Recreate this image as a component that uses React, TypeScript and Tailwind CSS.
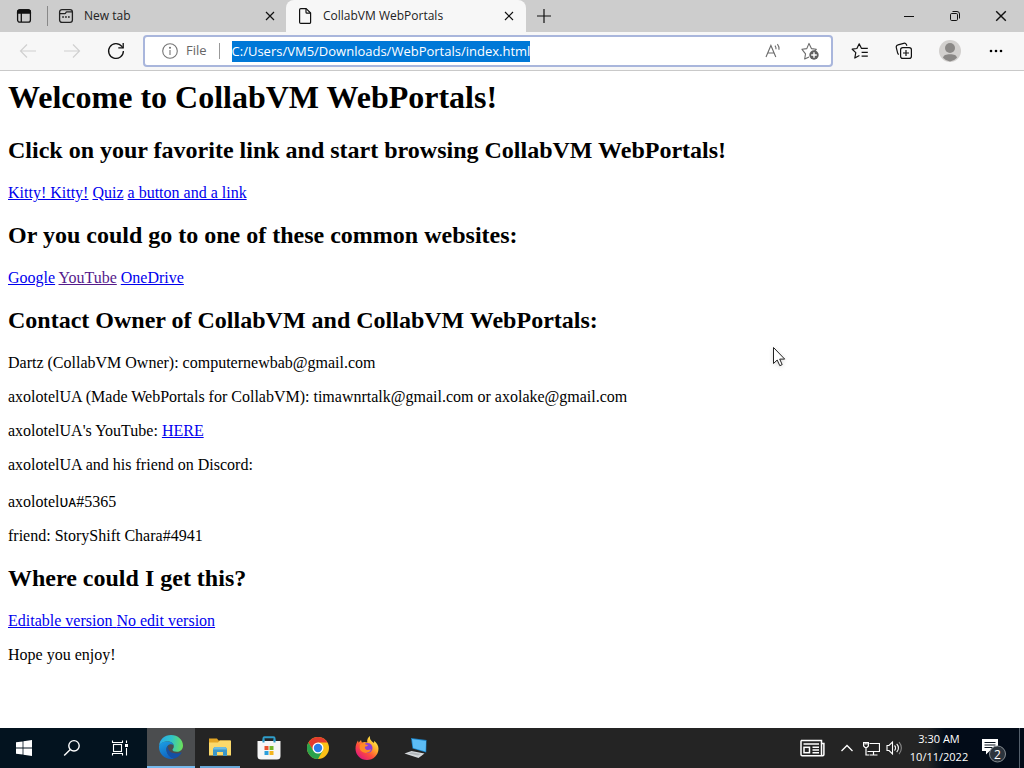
import React, { useEffect, useRef } from 'react';

const link = 'text-[#0000ee] underline';
const h2 = 'text-2xl leading-[27px] font-bold';

function TabActionsIcon() {
  return (
    <svg width="16" height="16" viewBox="0 0 16 16" fill="none" stroke="#111" strokeWidth="1.3">
      <rect x="1.6" y="1.8" width="12.8" height="12.4" rx="2.2" />
      <path d="M1.6 5V4a2.2 2.2 0 0 1 2.2-2.2h8.4A2.2 2.2 0 0 1 14.4 4v1z" fill="#111" />
      <path d="M5.3 5v9" />
    </svg>
  );
}

function NewTabIcon() {
  return (
    <svg width="16" height="16" viewBox="0 0 16 16" fill="none" stroke="#222" strokeWidth="1.3">
      <rect x="1.6" y="1.6" width="12.8" height="12.8" rx="2.4" />
      <path d="M1.6 5.6h5.2c1.2 0 .8-1.8 2-1.8h5.2" />
      <path d="M4.2 9h1.7M7.1 9h1.7M10 9h1.7" strokeWidth="1.7" />
    </svg>
  );
}

function PageIcon() {
  return (
    <svg width="16" height="18" viewBox="0 0 16 18" fill="none" stroke="#111" strokeWidth="1.2" strokeLinejoin="round">
      <path d="M2.6 2.8a1.2 1.2 0 0 1 1.2-1.2h5.4L13.6 6v9.2a1.2 1.2 0 0 1-1.2 1.2H3.8a1.2 1.2 0 0 1-1.2-1.2z" />
      <path d="M9 1.8v3.4a1 1 0 0 0 1 1h3.4" />
    </svg>
  );
}

function Cross({ size }: { size: number }) {
  return (
    <svg width={size} height={size} viewBox="0 0 10 10" fill="none" stroke="#111" strokeWidth="1.2">
      <path d="M1 1l8 8M9 1L1 9" />
    </svg>
  );
}

function Arrow({ flip }: { flip?: boolean }) {
  return (
    <svg width="18" height="16" viewBox="0 0 18 16" fill="none" stroke="#d0d0d0" strokeWidth="1.2" className={flip ? 'rotate-180' : ''}>
      <path d="M17 8H1.5M8 1.5L1.5 8 8 14.5" />
    </svg>
  );
}

function ReloadIcon() {
  return (
    <svg width="18" height="18" viewBox="0 0 18 18" fill="none" stroke="#111" strokeWidth="1.3">
      <path d="M16.4 9A7.4 7.4 0 1 1 14.8 4.4l1.2 1.4" />
      <path d="M16.2 1v4.9h-4.9" />
    </svg>
  );
}

function InfoIcon() {
  return (
    <svg width="16" height="16" viewBox="0 0 16 16" fill="none" stroke="#767676" strokeWidth="1.1">
      <circle cx="8" cy="8" r="7.3" />
      <path d="M8 7v5" />
      <circle cx="8" cy="4.8" r=".5" fill="#767676" />
    </svg>
  );
}

function ReadAloudIcon() {
  return (
    <svg width="16" height="16" viewBox="0 0 16 16" fill="none" stroke="#6b6b6b" strokeWidth="1.1">
      <path d="M1 14L5.9 2.5 10.8 14M2.8 10h6.3" />
      <path d="M10 2.6a5 5 0 0 1 1 3.6M12.4 1.2a7.6 7.6 0 0 1 1.6 5.6" />
    </svg>
  );
}

function AddFavoriteIcon() {
  return (
    <svg width="18" height="18" viewBox="0 0 18 18" fill="none" stroke="#6b6b6b" strokeWidth="1.1" strokeLinejoin="round">
      <path d="M8 15.1L3.7 17l.8-5.2L1 7.3l4.8-.7L8 1.4l2.4 5.2 4.9.7-2 2" />
      <circle cx="13" cy="13" r="4.7" fill="#5f5f5f" stroke="none" />
      <path d="M13 10.2v5.6M10.2 13h5.6" stroke="#fff" strokeWidth="1.4" />
    </svg>
  );
}

function FavoritesIcon() {
  return (
    <svg width="18" height="18" viewBox="0 0 18 18" fill="none" stroke="#111" strokeWidth="1.2" strokeLinejoin="round">
      <path d="M8.4 13.4L3.8 16l1-5.4L1.2 7.2l4.7-.7L8.2 1.8l2.2 4.5h6.4M10.6 10.4h6.2M10.6 14.2h6.2" />
    </svg>
  );
}

function CollectionsIcon() {
  return (
    <svg width="18" height="18" viewBox="0 0 18 18" fill="none" stroke="#111" strokeWidth="1.2">
      <path d="M3.8 12.4A2.5 2.5 0 0 1 2.6 10.8L1.3 5.6A2.3 2.3 0 0 1 3 2.8l5.7-1.5a2.3 2.3 0 0 1 2.7 1.2l.5 1.3" />
      <rect x="5.6" y="5.6" width="10.8" height="10.8" rx="2.2" />
      <path d="M11 8v6M8 11h6" />
    </svg>
  );
}

function ProfileIcon() {
  return (
    <svg width="22" height="22" viewBox="0 0 22 22">
      <circle cx="11" cy="11" r="11" fill="#d2d0ce" />
      <circle cx="11" cy="8" r="5" fill="#8a8886" />
      <path d="M4 17.8C4.4 15.2 7 14.2 11 14.2s6.6 1 7 3.6A11 11 0 0 1 11 21.5 11 11 0 0 1 4 17.8z" fill="#8a8886" />
    </svg>
  );
}

function WindowsIcon() {
  return (
    <svg width="16" height="16" viewBox="0 0 16 16" fill="#fff">
      <path d="M0 2.3L6.6 1.4V7.6H0zM7.4 1.3L16 0v7.6H7.4zM0 8.4h6.6v6.2L0 13.7zM7.4 8.4H16V16l-8.6-1.2z" />
    </svg>
  );
}

function SearchIcon() {
  return (
    <svg width="18" height="18" viewBox="0 0 18 18" fill="none" stroke="#fff" strokeWidth="1.4">
      <circle cx="11" cy="6.8" r="5.2" />
      <path d="M7.3 10.5L1.2 16.6" />
    </svg>
  );
}

function TaskViewIcon() {
  return (
    <svg width="18" height="16" viewBox="0 0 18 16" fill="none" stroke="#fff" strokeWidth="1.1">
      <rect x="2.5" y="4.500" width="8" height="7" />
      <path d="M1.5 .5v2h10v-2M1.5 15.5v-2h10v2M15.5 .5v2.500M15.500 8v7.500" />
      <rect x="14" y="4" width="3" height="3" fill="#fff" stroke="none" />
    </svg>
  );
}

function EdgeIcon() {
  return (
    <svg width="26" height="26" viewBox="0 0 26 26">
      <defs>
        <linearGradient id="edgeTop" x1="0" y1=".4" x2="1" y2=".5">
          <stop offset="0" stopColor="#2aa9e8" />
          <stop offset=".5" stopColor="#2fc3c8" />
          <stop offset="1" stopColor="#6be05a" />
        </linearGradient>
        <linearGradient id="edgeLeft" x1=".2" y1="0" x2=".6" y2="1">
          <stop offset="0" stopColor="#1b9de2" />
          <stop offset="1" stopColor="#0f62c0" />
        </linearGradient>
      </defs>
      <path d="M1 12C1.5 5.5 6.5 1 13 1c7 0 12 5 12 10.5 0 4-2.8 6.3-6.2 6.3-2.8 0-4.3-1-4.3-2 0-.8 1.3-1.3 1.3-3.6C15.800 9.400 13 7.500 9.700 7.500 5.500 7.500 2 9.500 1 12z" fill="url(#edgeTop)" />
      <path d="M1 13c0-3.300 3.600-5.500 8.500-5.500 3.500 0 5.700 1.700 6.200 3.800-1-.9-2.200-1.200-3.300-1C9.400 10.800 8 13.500 8.500 16.500c.6 4 3.500 7 7.500 8-1 .4-2 .5-3 .5C6.400 25 1 19.600 1 13z" fill="url(#edgeLeft)" />
      <path d="M10.700 11.200C8.500 12.800 8 15.500 8.900 18.200c1.200 3.800 4.600 6.300 7.800 6.200 3-1 5.300-3 6.800-5.400.3-.5-.1-.8-.6-.6-5.400 2.400-11.500.2-12.700-3.700-.4-1.300-.2-2.500.5-3.500z" fill="#1550a5" />
    </svg>
  );
}

function FolderIcon() {
  return (
    <svg width="24" height="20" viewBox="0 0 24 20">
      <path d="M1 1.500h8l1.500 2H22v4H1z" fill="#e3a524" />
      <path d="M1 5.500h9l2-2h11V18.500H1z" fill="#fbd96b" />
      <path d="M5 19v-7.500l2-1.500h10l2 1.500V19h-4v-4H9v4z" fill="#3b97c8" />
      <path d="M5 11.500l2-1.500h10l2 1.500v1H5z" fill="#6bbce2" />
    </svg>
  );
}

function StoreIcon() {
  return (
    <svg width="24" height="24" viewBox="0 0 24 24">
      <path d="M6.500 7V2.200a1 1 0 0 1 1-1h9a1 1 0 0 1 1 1V7" fill="none" stroke="#2f9dc9" strokeWidth="2" />
      <path d="M.5 5h23V20a3.500 3.500 0 0 1-3.500 3.500H4A3.500 3.500 0 0 1 .5 20z" fill="#f6f6f6" />
      <path d="M6.500 6.500V3.500M17.500 6.500V3.500" stroke="#2f9dc9" strokeWidth="2" />
      <path d="M7.500 10H11.500V14H7.500z" fill="#e8522c" />
      <path d="M12.500 10h4v4h-4z" fill="#76b82a" />
      <path d="M7.500 15h4v4h-4z" fill="#2b9fdc" />
      <path d="M12.500 15h4v4h-4z" fill="#f3b51d" />
    </svg>
  );
}

function ChromeIcon() {
  return (
    <svg width="22" height="22" viewBox="0 0 22 22">
      <circle cx="11" cy="11" r="11" fill="#fbc116" />
      <path d="M1.470 5.500A11 11 0 0 1 20.530 5.500H11L6.240 13.750z" fill="#e33b2e" />
      <path d="M1.470 5.500A11 11 0 0 0 11 22L15.760 13.750 11 16.500 6.240 13.750z" fill="#2ba24c" />
      <circle cx="11" cy="11" r="5.500" fill="#fff" />
      <circle cx="11" cy="11" r="4.200" fill="#2b7de9" />
    </svg>
  );
}

function FirefoxIcon() {
  return (
    <svg width="24" height="24" viewBox="0 0 24 24">
      <defs>
        <linearGradient id="fox" x1=".85" y1=".1" x2=".2" y2=".9">
          <stop offset="0" stopColor="#fff04a" />
          <stop offset=".35" stopColor="#ffab2c" />
          <stop offset=".65" stopColor="#ff5038" />
          <stop offset="1" stopColor="#e31d78" />
        </linearGradient>
      </defs>
      <path d="M15 0c-.5 2.500.5 4 2 5.500l2 1.500c.3-.8.2-1.500-.1-2.200C22 7 23.500 10 23.500 12.700 23.500 19 18.300 24 12 24S.5 19 .5 12.700C.5 9.500 1.500 6.500 3 4.500l.6 2.200L6 4l.8 2.500c2-.8 4-.6 5.500 0C11.700 4 13 1.200 15 0z" fill="url(#fox)" />
      <circle cx="12.500" cy="12" r="5" fill="#8b3fd6" />
      <path d="M5 8.500c2-1.200 4.500-.9 6.500.2l1.500.2c-.3 1.200-1.700 1.500-3 1.800-.5 1.500.5 2.900 2 3.200 1.800.3 2.800-.6 4.300-.3-1.300 2.600-4.500 4-7.300 3C5 15.300 4 12.500 5 8.500z" fill="#ff8a25" />
    </svg>
  );
}

function LaptopIcon() {
  return (
    <svg width="24" height="22" viewBox="0 0 24 22">
      <path d="M7 1l15.500 2-.3 12.500L8.500 11.500z" fill="#1c82c4" />
      <path d="M8 2l14 1.900-.4 10.600L9.200 11z" fill="#5cbcf5" />
      <path d="M.5 16.500L7.500 14 20.500 16.500 14.500 21z" fill="#d5d9dc" />
      <path d="M4 16.500l3.800-1.300 9 1.700-2.800 1.700z" fill="#b3b8bc" />
    </svg>
  );
}

function NewsIcon() {
  return (
    <svg width="25" height="18" viewBox="0 0 25 18" fill="none" stroke="#fff" strokeWidth="1.500">
      <path d="M1 1.500h20.500v14a1.200 1.200 0 0 0 2.400 0V4.500h-2.400M1 1.500v14a1.200 1.200 0 0 0 1.200 1.200h20.500M3.500 5h15.500M12.500 8.300H19M12.500 11H19M12.500 13.700H19" />
      <rect x="4" y="8.300" width="5.500" height="5.400" />
    </svg>
  );
}

function NetworkIcon() {
  return (
    <svg width="17" height="15" viewBox="0 0 17 15" fill="none" stroke="#fff" strokeWidth="1.200">
      <path d="M6.500 2.500h10v8h-12M10.500 10.500v3.500M6.500 14h8" />
      <path d="M.6 1.500h4.800v3.500l-1.400 1.500H2L.6 5zM3 6.500v7.500h3M2.200 1.500v2M3.900 1.500v2" />
    </svg>
  );
}

function VolumeIcon() {
  return (
    <svg width="17" height="16" viewBox="0 0 17 16" fill="none" stroke="#fff" strokeWidth="1.100">
      <path d="M1 5.500h2L6.500 2v12L3 10.500H1z" />
      <path d="M8.500 5.500a3.500 3.500 0 0 1 0 5M10.700 3.800a6 6 0 0 1 0 8.400" />
      <path d="M13 2a8.800 8.800 0 0 1 0 12" stroke="#888" />
    </svg>
  );
}

function NotificationsIcon() {
  return (
    <svg width="26" height="26" viewBox="0 0 26 26">
      <path d="M1 2h16v12H8.500L5 17.500V14H1z" fill="#fff" />
      <path d="M3.500 5.500h11M3.500 8h11M3.500 10.500h8" stroke="#0a1420" />
      <circle cx="16.500" cy="17" r="8" fill="#2b333c" stroke="#858b91" />
    </svg>
  );
}

function BrowserTabs() {
  return (
    <div className="flex h-8 bg-[#cdcdcd] text-xs text-[#222]">
      <button aria-label="Tab actions" className="flex w-[47px] items-center justify-center"><TabActionsIcon /></button>
      <div className="my-[6px] w-px bg-[#888]" />
      <div className="flex w-[238px] min-w-0 items-center pr-[11px] pl-[10px]">
        <NewTabIcon />
        <span className="ml-[10px] flex-1 truncate">New tab</span>
        <button aria-label="Close New tab"><Cross size={10} /></button>
      </div>
      <div className="flex w-60 min-w-0 items-center rounded-t-lg bg-[#f7f7f7] pr-3 pl-[11px]">
        <PageIcon />
        <span className="ml-[10px] flex-1 truncate">CollabVM WebPortals</span>
        <button aria-label="Close CollabVM WebPortals"><Cross size={10} /></button>
      </div>
      <button aria-label="Open a new tab" className="flex w-9 items-center justify-center">
        <svg width="14" height="14" viewBox="0 0 14 14" stroke="#111" strokeWidth="1.200"><path d="M7 0v14M0 7h14" /></svg>
      </button>
      <div className="ml-auto flex">
        <button aria-label="Minimize" className="flex w-[46px] items-center justify-center">
          <svg width="10" height="10" viewBox="0 0 10 10" stroke="#111"><path d="M0 5.500h10" /></svg>
        </button>
        <button aria-label="Restore" className="flex w-[46px] items-center justify-center">
          <svg width="10" height="10" viewBox="0 0 10 10" fill="none" stroke="#111"><rect x=".5" y="2.500" width="7" height="7" rx="1.200" /><path d="M2.500 .5H7A2.500 2.500 0 0 1 9.500 3v4.500" /></svg>
        </button>
        <button aria-label="Close window" className="flex w-[46px] items-center justify-center"><Cross size={12} /></button>
      </div>
    </div>
  );
}

function Toolbar() {
  const address = useRef<HTMLInputElement>(null);
  useEffect(() => {
    address.current?.focus();
    address.current?.select();
  }, []);
  return (
    <div className="flex h-[39px] items-center border-b border-[#c9c9c9] bg-[#f7f7f7] px-[6px]">
      <button aria-label="Back" className="flex w-11 justify-center"><Arrow /></button>
      <button aria-label="Forward" className="flex w-11 justify-center"><Arrow flip /></button>
      <button aria-label="Refresh" className="flex w-11 justify-center"><ReloadIcon /></button>
      <div className="ml-[5px] flex h-8 min-w-0 flex-1 items-center rounded-[4px] border-2 border-[#a9b6dc] bg-white pr-3 pl-[17px] text-[13px] text-[#666]">
        <InfoIcon />
        <label htmlFor="address" className="ml-2">File</label>
        <div className="mx-3 h-4 w-px bg-[#999]" />
        <input
          id="address"
          ref={address}
          defaultValue="C:/Users/VM5/Downloads/WebPortals/index.html"
          className="h-[21px] min-w-0 flex-1 text-[13px] leading-[21px] text-black caret-transparent outline-none selection:bg-[#0078d7] selection:text-white"
        />
        <button aria-label="Read aloud" className="mr-5"><ReadAloudIcon /></button>
        <button aria-label="Add to favorites"><AddFavoriteIcon /></button>
      </div>
      <div className="ml-[5px] flex">
        <button aria-label="Favorites" className="flex w-11 items-center justify-center"><FavoritesIcon /></button>
        <button aria-label="Collections" className="flex w-11 items-center justify-center"><CollectionsIcon /></button>
        <button aria-label="Profile" className="flex w-12 items-center justify-center"><ProfileIcon /></button>
        <button aria-label="Settings and more" className="flex w-11 items-center justify-center">
          <svg width="14" height="4" viewBox="0 0 14 4"><circle cx="2" cy="2" r="1.300" /><circle cx="7" cy="2" r="1.300" /><circle cx="12" cy="2" r="1.300" /></svg>
        </button>
      </div>
    </div>
  );
}

function PageContent() {
  return (
    <main className="flex-1 px-2 pt-2 pb-8 font-['Liberation_Serif',serif] text-base leading-[18px] text-black">
      <h1 className="text-[32px] leading-[37px] font-bold">Welcome to CollabVM WebPortals!</h1>
      <div className="mt-[21px] flex flex-col gap-5">
        <h2 className={h2}>Click on your favorite link and start browsing CollabVM WebPortals!</h2>
        <p>
          <a href="#kitty" className={link}>Kitty! Kitty!</a> <a href="#quiz" className={link}>Quiz</a>{' '}
          <a href="#button" className={link}>a button and a link</a>
        </p>
        <h2 className={h2}>Or you could go to one of these common websites:</h2>
        <p>
          <a href="#google" className={link}>Google</a> <a href="#youtube" className="text-[#551a8b] underline">YouTube</a>{' '}
          <a href="#onedrive" className={link}>OneDrive</a>
        </p>
        <h2 className={h2}>Contact Owner of CollabVM and CollabVM WebPortals:</h2>
        <div className="flex flex-col gap-4">
          <p>Dartz (CollabVM Owner): computernewbab@gmail.com</p>
          <p>axolotelUA (Made WebPortals for CollabVM): timawnrtalk@gmail.com or axolake@gmail.com</p>
          <p>axolotelUA's YouTube: <a href="#here" className={link}>HERE</a></p>
          <p>axolotelUA and his friend on Discord:</p>
          <p className="pt-[2px]">axolotel<span className="font-['Open_Sans',sans-serif]">ᴜᴀ</span>#5365</p>
          <p>friend: StoryShift Chara#4941</p>
        </div>
        <h2 className={h2}>Where could I get this?</h2>
        <div className="flex flex-col gap-4">
          <p><a href="#editable" className={link}>Editable version </a><a href="#noedit" className={link}>No edit version</a></p>
          <p>Hope you enjoy!</p>
        </div>
      </div>
    </main>
  );
}

function Taskbar() {
  const app = 'flex w-[49px] items-center justify-center';
  return (
    <footer className="flex h-10 bg-[#242424] text-xs text-white">
      <div className="flex bg-[#03131f]">
        <button aria-label="Start" className="flex w-12 items-center justify-center"><WindowsIcon /></button>
        <button aria-label="Search" className="flex w-12 items-center justify-center"><SearchIcon /></button>
        <button aria-label="Task view" className="flex w-[51px] items-center justify-center pr-[3px]"><TaskViewIcon /></button>
      </div>
      <button aria-label="Microsoft Edge" className="flex w-12 items-center justify-center border-b-2 border-[#76b9ed] bg-[#4b4d4f]"><EdgeIcon /></button>
      <button aria-label="File Explorer" className="mr-1 ml-[5px] flex w-10 items-center justify-center border-b-2 border-[#6aa8d8]"><FolderIcon /></button>
      <button aria-label="Microsoft Store" className={app}><StoreIcon /></button>
      <button aria-label="Google Chrome" className={app}><ChromeIcon /></button>
      <button aria-label="Firefox" className={app}><FirefoxIcon /></button>
      <button aria-label="Remote computer" className={app}><LaptopIcon /></button>
      <div className="ml-auto flex items-center">
        <button aria-label="News and interests" className="mr-4"><NewsIcon /></button>
        <button aria-label="Show hidden icons" className="mr-[10px]">
          <svg width="12" height="8" viewBox="0 0 12 8" fill="none" stroke="#fff" strokeWidth="1.300"><path d="M.5 7L6 1.500 11.500 7" /></svg>
        </button>
        <button aria-label="Network" className="mr-[6px]"><NetworkIcon /></button>
        <button aria-label="Volume"><VolumeIcon /></button>
      </div>
      <div className="flex bg-linear-to-r from-[#242424] from-20% to-[#020b18] to-35%">
        <button className="flex w-[72px] flex-col items-center justify-center text-[11px] leading-[18px]">
          <time>3:30 AM</time>
          <time>10/11/2022</time>
        </button>
        <button aria-label="Notifications" className="relative flex w-11 items-center pt-1 pl-[6px]">
          <NotificationsIcon />
          <span className="absolute top-[19px] left-[19px] leading-4">2</span>
        </button>
        <button aria-label="Show desktop" className="w-[5px] border-l border-[#55606c]" />
      </div>
    </footer>
  );
}

export default function App() {
  return (
    <div className="relative flex min-h-screen flex-col bg-white font-['Open_Sans',sans-serif]">
      <BrowserTabs />
      <Toolbar />
      <PageContent />
      <Taskbar />
      <svg className="pointer-events-none absolute top-[346px] left-[772px] drop-shadow-sm" width="14" height="22" viewBox="0 0 14 22" aria-hidden="true">
        <path d="M1.500 1.500v16l3.700-3.500 2.600 5.700 2.400-1.100-2.500-5.500h5z" fill="#fff" stroke="#222" />
      </svg>
    </div>
  );
}
